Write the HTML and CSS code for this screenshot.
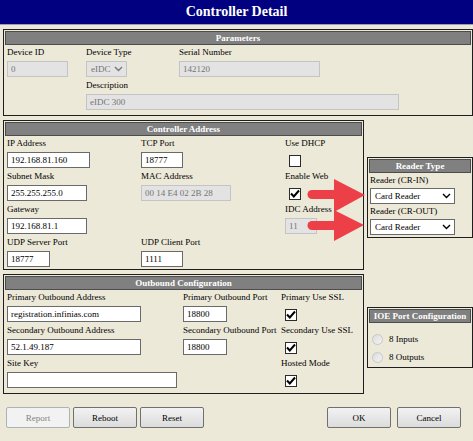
FILE: index.html
```html
<!DOCTYPE html>
<html lang="en">
<head>
    <meta charset="UTF-8">
    <title>Controller Detail</title>
    <link rel="stylesheet" href="styles.css">
</head>
<body>
    <div class="title">Controller Detail</div>

    <div class="page">
        <div class="panel params">
            <div class="panel-head">Parameters</div>
            <div class="fields params-grid">
                <div class="field">
                    <label>Device ID</label>
                    <input class="w-id" type="text" value="0" disabled>
                </div>
                <div class="field">
                    <label>Device Type</label>
                    <div class="select disabled w-type"><span>eIDC</span>
                        <svg width="9" height="6" viewBox="0 0 9 6"><path d="M1 1 L4.5 4.5 L8 1" fill="none" stroke="#777" stroke-width="1.4"/></svg>
                    </div>
                </div>
                <div class="field">
                    <label>Serial Number</label>
                    <input class="w-serial" type="text" value="142120" disabled>
                </div>
                <div class="field span-desc">
                    <label>Description</label>
                    <input class="w-desc" type="text" value="eIDC 300" disabled>
                </div>
            </div>
        </div>

        <div class="columns">
            <div class="left">
                <div class="panel">
                    <div class="panel-head">Controller Address</div>
                    <div class="fields address-grid">
                        <div class="field">
                            <label>IP Address</label>
                            <input class="w-ip" type="text" value="192.168.81.160">
                        </div>
                        <div class="field">
                            <label>TCP Port</label>
                            <input class="w-port" type="text" value="18777">
                        </div>
                        <div class="field">
                            <label>Use DHCP</label>
                            <span class="check"></span>
                        </div>

                        <div class="field">
                            <label>Subnet Mask</label>
                            <input class="w-mask" type="text" value="255.255.255.0">
                        </div>
                        <div class="field">
                            <label>MAC Address</label>
                            <input class="w-mac" type="text" value="00 14 E4 02 2B 28" disabled>
                        </div>
                        <div class="field">
                            <label>Enable Web</label>
                            <span class="check"><svg width="12" height="12" viewBox="0 0 12 12"><path d="M2 5.5 L4.8 8.5 L10 2.5" fill="none" stroke="#000" stroke-width="2"/></svg></span>
                        </div>

                        <div class="field">
                            <label>Gateway</label>
                            <input class="w-mask" type="text" value="192.168.81.1">
                        </div>
                        <div></div>
                        <div class="field">
                            <label>IDC Address</label>
                            <input class="w-idc" type="text" value="11" disabled>
                        </div>

                        <div class="field">
                            <label>UDP Server Port</label>
                            <input class="w-udp" type="text" value="18777">
                        </div>
                        <div class="field">
                            <label>UDP Client Port</label>
                            <input class="w-port" type="text" value="1111">
                        </div>
                    </div>
                </div>

                <div class="panel">
                    <div class="panel-head">Outbound Configuration</div>
                    <div class="fields outbound-grid">
                        <div class="field">
                            <label>Primary Outbound Address</label>
                            <input class="w-addr" type="text" value="registration.infinias.com">
                        </div>
                        <div class="field">
                            <label>Primary Outbound Port</label>
                            <input class="w-oport" type="text" value="18800">
                        </div>
                        <div class="field">
                            <label>Primary Use SSL</label>
                            <span class="check"><svg width="12" height="12" viewBox="0 0 12 12"><path d="M2 5.5 L4.8 8.5 L10 2.5" fill="none" stroke="#000" stroke-width="2"/></svg></span>
                        </div>

                        <div class="field">
                            <label>Secondary Outbound Address</label>
                            <input class="w-addr" type="text" value="52.1.49.187">
                        </div>
                        <div class="field">
                            <label>Secondary Outbound Port</label>
                            <input class="w-oport" type="text" value="18800">
                        </div>
                        <div class="field">
                            <label>Secondary Use SSL</label>
                            <span class="check"><svg width="12" height="12" viewBox="0 0 12 12"><path d="M2 5.5 L4.8 8.5 L10 2.5" fill="none" stroke="#000" stroke-width="2"/></svg></span>
                        </div>

                        <div class="field">
                            <label>Site Key</label>
                            <input class="w-key" type="text" value="">
                        </div>
                        <div></div>
                        <div class="field">
                            <label>Hosted Mode</label>
                            <span class="check"><svg width="12" height="12" viewBox="0 0 12 12"><path d="M2 5.5 L4.8 8.5 L10 2.5" fill="none" stroke="#000" stroke-width="2"/></svg></span>
                        </div>
                    </div>
                </div>
            </div>

            <div class="right">
                <div class="panel reader">
                    <div class="panel-head">Reader Type</div>
                    <div class="side-fields">
                        <label>Reader (CR-IN)</label>
                        <div class="select w-reader"><span>Card Reader</span>
                            <svg width="9" height="6" viewBox="0 0 9 6"><path d="M1 1 L4.5 4.5 L8 1" fill="none" stroke="#000" stroke-width="1.4"/></svg>
                        </div>
                        <label>Reader (CR-OUT)</label>
                        <div class="select w-reader"><span>Card Reader</span>
                            <svg width="9" height="6" viewBox="0 0 9 6"><path d="M1 1 L4.5 4.5 L8 1" fill="none" stroke="#000" stroke-width="1.4"/></svg>
                        </div>
                    </div>
                </div>

                <div class="panel ioe">
                    <div class="panel-head">IOE Port Configuration</div>
                    <div class="radios">
                        <div class="radio-row"><span class="radio"></span>8 Inputs</div>
                        <div class="radio-row"><span class="radio"></span>8 Outputs</div>
                    </div>
                </div>
            </div>
        </div>

        <div class="buttons">
            <button class="btn" disabled>Report</button>
            <button class="btn">Reboot</button>
            <button class="btn">Reset</button>
            <button class="btn ok">OK</button>
            <button class="btn cancel">Cancel</button>
        </div>
    </div>

    <!-- callout arrows pointing at the reader selects -->
    <svg class="arrows" width="473" height="441" viewBox="0 0 473 441">
        <line x1="312" y1="194.5" x2="338" y2="194.5" stroke="#ec3f47" stroke-width="9" stroke-linecap="round"/>
        <polygon points="334,179 365,195 334,212" fill="#ec3f47"/>
        <line x1="312" y1="225.5" x2="338" y2="225.5" stroke="#ec3f47" stroke-width="9" stroke-linecap="round"/>
        <polygon points="334,210 364,225 334,241" fill="#ec3f47"/>
    </svg>
</body>
</html>
```

FILE: styles.css
```css
body {
    margin: 0;
    background-color: #ece9d8;
    font-family: "Liberation Serif", "Times New Roman", serif;
    font-size: 9px;
    color: #000;
    position: relative;
    width: 473px;
    height: 441px;
    overflow: hidden;
}

.title {
    height: 24px;
    line-height: 24px;
    background-color: #000080;
    border-bottom: 1px solid #9c9cb4;
    color: #fff;
    font-weight: bold;
    font-size: 14px;
    text-align: center;
}

.page {
    width: 470px;
    margin-left: 3px;
}

.panel {
    border: 1px solid #1e1e1e;
    padding: 1px;
    box-sizing: border-box;
}

.panel-head {
    height: 14px;
    line-height: 12px;
    box-sizing: border-box;
    background-color: #808080;
    border: 1px solid #4c4c4c;
    color: #fff;
    font-weight: bold;
    text-align: center;
    white-space: nowrap;
}

.params {
    margin-top: 4px;
}

.fields {
    display: grid;
    row-gap: 1px;
    padding: 0 0 4px 2px;
}

.params-grid {
    grid-template-columns: 79px 93px 1fr;
}

.span-desc {
    grid-column: 2 / span 2;
}

.address-grid {
    grid-template-columns: 134px 144px 1fr;
    padding-bottom: 1px;
}

.outbound-grid {
    grid-template-columns: 176px 98px 1fr;
}

.field {
    display: flex;
    flex-direction: column;
    align-items: flex-start;
}

.field label,
.side-fields label {
    line-height: 14px;
    white-space: nowrap;
}

.field input,
.field .select {
    margin-top: 2px;
}

input {
    height: 16px;
    box-sizing: border-box;
    border: 1px solid #6a6a6a;
    background: #fff;
    font-family: inherit;
    font-size: 9px;
    color: #000;
    padding: 0 0 0 3px;
    margin: 0;
    outline: none;
}

input:disabled {
    background: #e3e3e3;
    border-color: #c4c4c4;
    color: #747474;
}

.select {
    height: 16px;
    box-sizing: border-box;
    border: 1px solid #6a6a6a;
    background: #fff;
    display: flex;
    align-items: center;
    justify-content: space-between;
    padding: 0 3px 0 4px;
}

.select.disabled {
    background: #e3e3e3;
    border-color: #c4c4c4;
    color: #747474;
}

.check {
    width: 12px;
    height: 12px;
    box-sizing: border-box;
    border: 1px solid #2b2b2b;
    background: #fff;
    margin: 5px 0 0 4px;
    display: flex;
    align-items: center;
    justify-content: center;
}

.check svg {
    flex: none;
}

.w-id { width: 61px; }
.w-type { width: 41px; }
.w-serial { width: 141px; }
.w-desc { width: 313px; }
.w-ip { width: 83px; }
.w-mask { width: 80px; }
.w-udp { width: 43px; }
.w-port { width: 42px; }
.w-mac { width: 90px; }
.w-idc { width: 32px; }
.w-addr { width: 134px; }
.w-oport { width: 44px; }
.w-key { width: 170px; }
.w-reader { width: 85px; }

.columns {
    display: flex;
    gap: 3px;
    margin-top: 4px;
}

.left {
    width: 361px;
    display: flex;
    flex-direction: column;
    gap: 4px;
}

.right {
    width: 106px;
}

.reader {
    margin-top: 37px;
}

.side-fields {
    padding: 0 0 1px 1px;
}

.side-fields .select {
    margin-top: 1px;
}

.ioe {
    margin-top: 69px;
}

.radios {
    padding-top: 7px;
}

.radio-row {
    height: 18px;
    display: flex;
    align-items: center;
    padding-left: 3px;
}

.radio {
    width: 11px;
    height: 11px;
    box-sizing: border-box;
    border-radius: 50%;
    border: 1px solid #c8c8c8;
    background: linear-gradient(135deg, #dcdcdc, #f4f4f4);
    margin-right: 6px;
}

.buttons {
    display: flex;
    gap: 3px;
    margin-top: 13px;
    padding-left: 3px;
}

.btn {
    width: 64px;
    height: 21px;
    border: 1px solid #707070;
    border-radius: 2px;
    background: linear-gradient(#f2f2f2, #dcdcdc);
    font-family: inherit;
    font-size: 9px;
    color: #000;
    padding: 0;
}

.btn:disabled {
    background: #f2f2f2;
    border-color: #adb2b5;
    color: #838383;
}

.btn.ok {
    margin-left: auto;
}

.btn.cancel {
    margin-left: 3px;
    margin-right: 12px;
}

.arrows {
    position: absolute;
    left: 0;
    top: 0;
    pointer-events: none;
}
```
